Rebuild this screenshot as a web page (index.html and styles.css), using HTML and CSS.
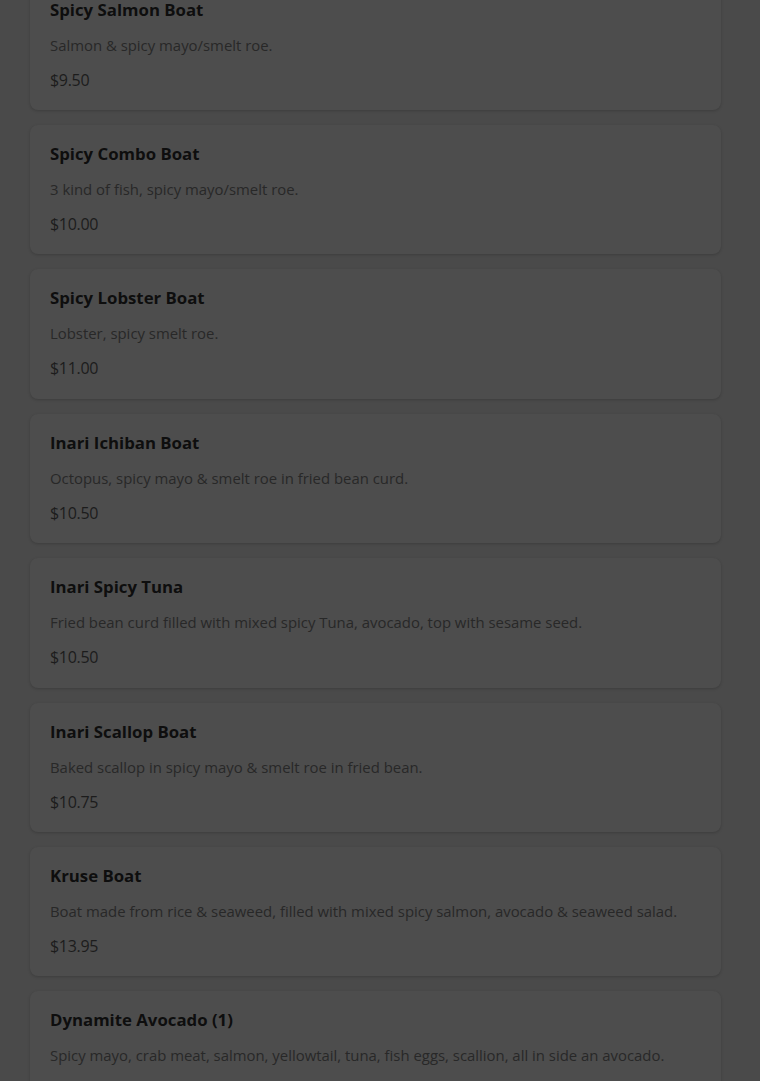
FILE: index.html
```html
<!DOCTYPE html>
<html>
<head>
<meta charset="utf-8">
<link rel="stylesheet" href="styles.css">
</head>
<body>
<div class="menu">
  <div class="card">
    <div class="title">Spicy Salmon Boat</div>
    <div class="desc">Salmon &amp; spicy mayo/smelt roe.</div>
    <div class="price">$9.50</div>
  </div>
  <div class="card">
    <div class="title">Spicy Combo Boat</div>
    <div class="desc">3 kind of fish, spicy mayo/smelt roe.</div>
    <div class="price">$10.00</div>
  </div>
  <div class="card">
    <div class="title">Spicy Lobster Boat</div>
    <div class="desc">Lobster, spicy smelt roe.</div>
    <div class="price">$11.00</div>
  </div>
  <div class="card">
    <div class="title">Inari Ichiban Boat</div>
    <div class="desc">Octopus, spicy mayo &amp; smelt roe in fried bean curd.</div>
    <div class="price">$10.50</div>
  </div>
  <div class="card">
    <div class="title">Inari Spicy Tuna</div>
    <div class="desc">Fried bean curd filled with mixed spicy Tuna, avocado, top with sesame seed.</div>
    <div class="price">$10.50</div>
  </div>
  <div class="card">
    <div class="title">Inari Scallop Boat</div>
    <div class="desc">Baked scallop in spicy mayo &amp; smelt roe in fried bean.</div>
    <div class="price">$10.75</div>
  </div>
  <div class="card">
    <div class="title">Kruse Boat</div>
    <div class="desc">Boat made from rice &amp; seaweed, filled with mixed spicy salmon, avocado &amp; seaweed salad.</div>
    <div class="price">$13.95</div>
  </div>
  <div class="card">
    <div class="title">Dynamite Avocado (1)</div>
    <div class="desc">Spicy mayo, crab meat, salmon, yellowtail, tuna, fish eggs, scallion, all in side an avocado.</div>
    <div class="price">$9.95</div>
  </div>
</div>
</body>
</html>
```
FILE: styles.css
```css
html, body {
  margin: 0;
  padding: 0;
  background: #4a4a4a;
  overflow: hidden;
  height: 100%;
}
body {
  font-family: "Open Sans", "DejaVu Sans", sans-serif;
}
.menu {
  display: flex;
  flex-direction: column;
  gap: 15px;
  padding: 0 39px 0 30px;
  margin-top: -19.4px;
}
.card {
  background: #4d4d4d;
  border-radius: 8px;
  padding: 20px 20px 21px 20px;
  box-shadow: 0 1px 3px rgba(0,0,0,0.18);
  display: flex;
  flex-direction: column;
}
.title {
  font-size: 16.8px;
  font-weight: 700;
  line-height: 18px;
  color: #0e0e0e;
}
.desc {
  font-size: 14.9px;
  line-height: 20px;
  color: #282828;
  margin-top: 16px;
}
.price {
  font-size: 16px;
  line-height: 18.4px;
  color: #1c1c1c;
  margin-top: 16px;
  letter-spacing: -0.3px;
}
```
